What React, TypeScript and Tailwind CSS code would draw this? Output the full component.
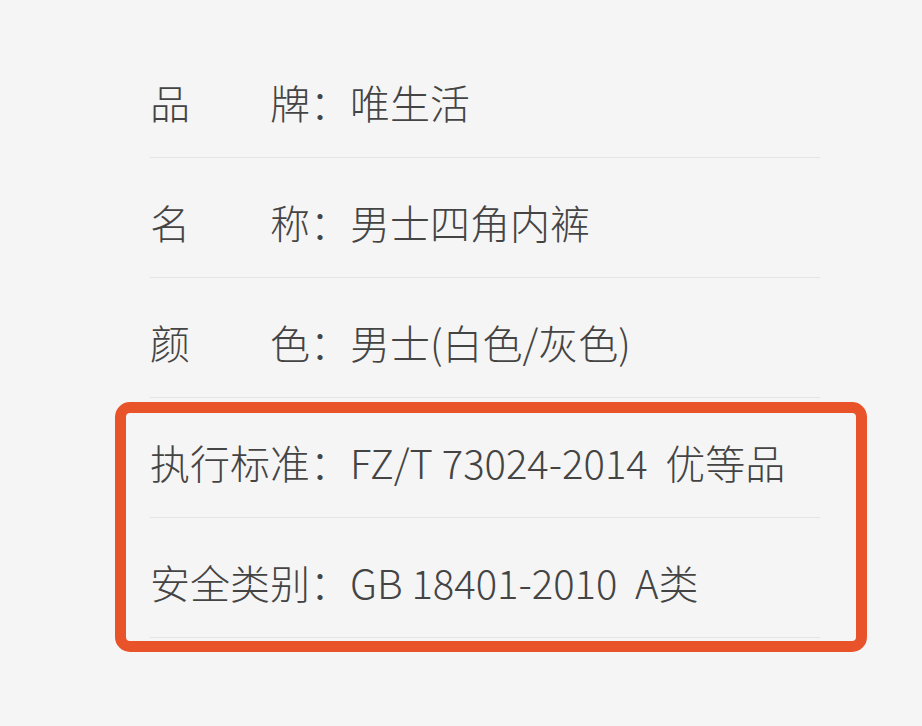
const ROWS = [
  { label: ["品", "牌"], value: "唯生活" },
  { label: ["名", "称"], value: "男士四角内裤" },
  { label: ["颜", "色"], value: "男士(白色/灰色)" },
  { label: ["执", "行", "标", "准"], value: "FZ/T 73024-2014  优等品" },
  { label: ["安", "全", "类", "别"], value: "GB 18401-2010  A类" },
];

function SpecRow({ label, value }: { label: string[]; value: string }) {
  return (
    <div className="flex items-center border-b border-[#e4e4e4] pt-[44px] pb-[35px] leading-[40px]">
      <span className="flex w-[160px] justify-between">
        {label.map((ch, i) => (
          <span key={i}>{ch}</span>
        ))}
      </span>
      <span>：</span>
      <span className="whitespace-pre">{value}</span>
    </div>
  );
}

export default function App() {
  return (
    <div
      className="min-h-[726px] w-full bg-[#f5f5f5] pt-[38px] text-[40px] font-light text-[#444444]"
      style={{ fontFamily: '"Noto Sans CJK SC", "Noto Sans", sans-serif' }}
    >
      <div className="ml-[150px] w-[670px]">
        {ROWS.slice(0, 3).map((r) => (
          <SpecRow key={r.value} label={r.label} value={r.value} />
        ))}
        <div className="relative">
          {ROWS.slice(3).map((r) => (
            <SpecRow key={r.value} label={r.label} value={r.value} />
          ))}
          <div className="pointer-events-none absolute -left-[35px] -right-[47px] top-[4px] -bottom-[14px] rounded-[15px] border-[11px] border-[#e8532a]" />
        </div>
      </div>
    </div>
  );
}
